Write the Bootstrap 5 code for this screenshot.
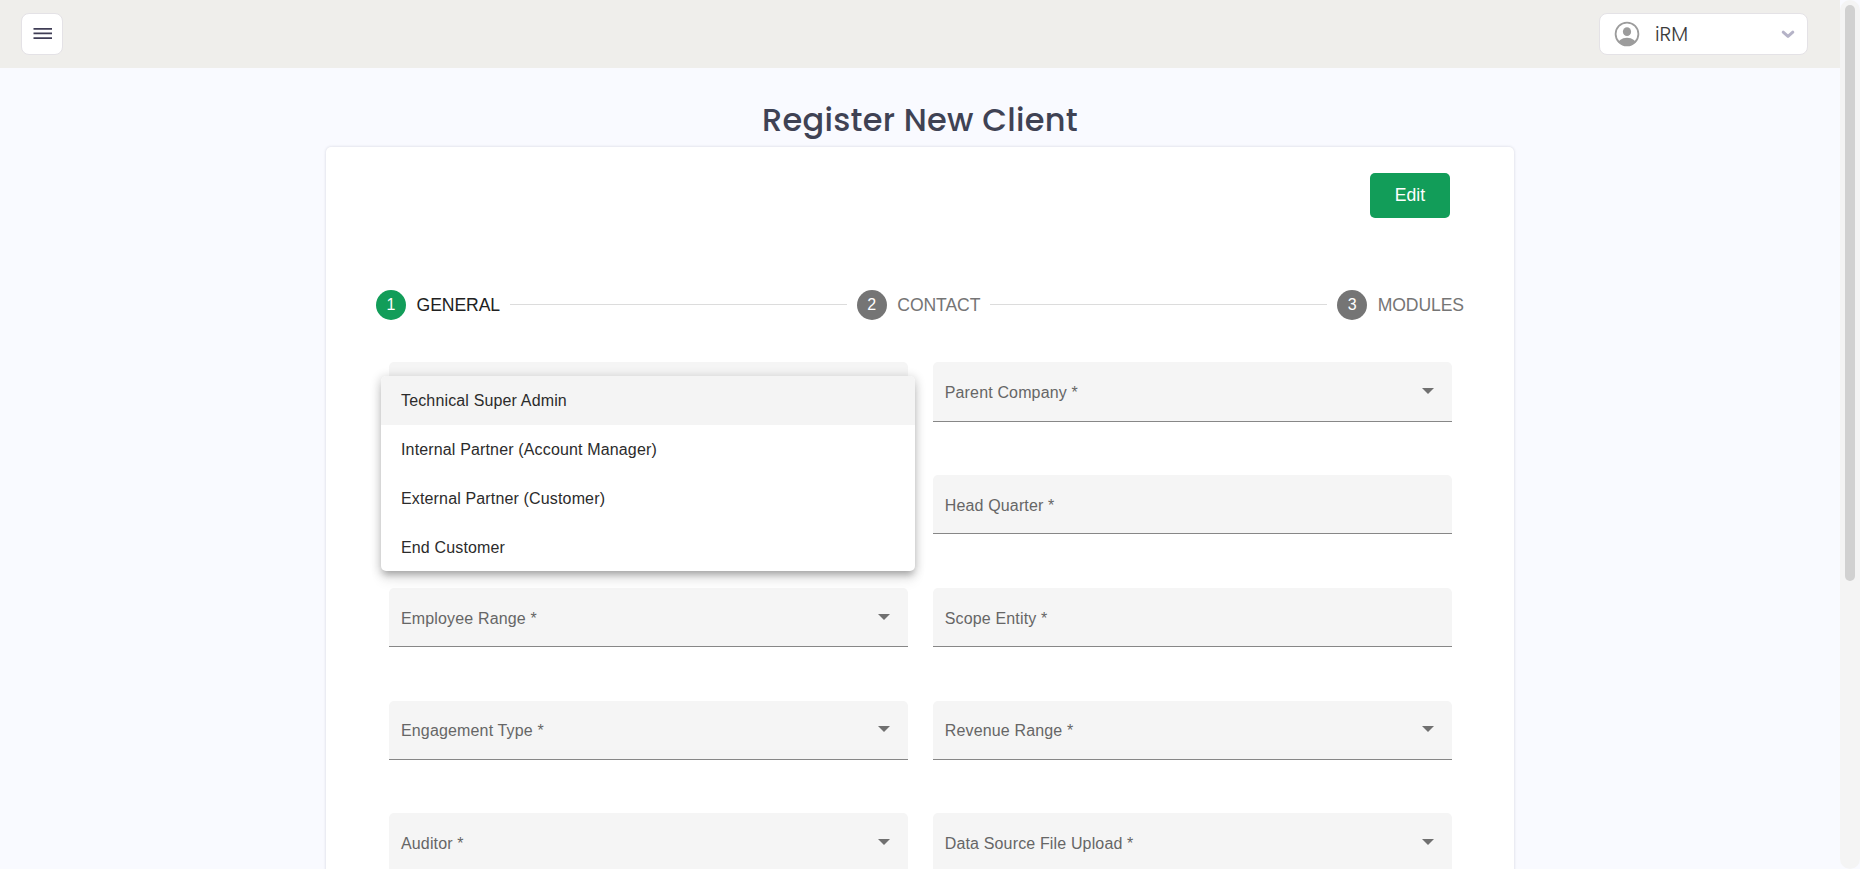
<!DOCTYPE html>
<html lang="en">
<head>
<meta charset="utf-8">
<meta name="viewport" content="width=device-width, initial-scale=1">
<title>Register New Client</title>
<link href="https://cdn.jsdelivr.net/npm/bootstrap@5.3.0/dist/css/bootstrap.min.css" rel="stylesheet">
<style>
  body { font-family: "Liberation Sans", Arial, sans-serif; background: #f9faff; color: #212121; height: 100vh; }
  .top-bar { height: 68px; background: #efeeeb; padding: 13px 32px 0 21px; }
  .menu-btn { width: 42px; height: 42px; background: #fff; border: 1px solid #e4e2e6; border-radius: 8px; }
  .menu-btn svg { margin: 13px 0 0 1px; }
  .profile-btn { width: 209px; height: 42px; background: #fff; border: 1px solid #e4e2e6; border-radius: 8px; padding: 0 12px 0 14px; color: #3c3c3c; }
  .profile-name { font-family: Poppins, Inter, sans-serif; font-size: 20px; margin-left: 15px; font-weight: 300; }
  .page-title { font-family: Poppins, Inter, sans-serif; font-weight: 500; font-size: 32px; line-height: 48px; letter-spacing: .25px; color: #3f4254; margin: 28px 0 3px; }
  .form-card { width: 1188px; height: 900px; border: 0; border-radius: 5px; margin-left: 326px; box-shadow: 0 0 3px rgba(60,60,90,.2); padding: 26px 50px 0 50px; }
  .edit-btn { width: 80px; height: 45px; background: #129d59; border: 0; border-radius: 5px; font-size: 17.6px; color: #fff; padding: 0 0 1px; margin-right: 14px; }
  .stepper { margin-top: 72px; height: 30px; font-size: 17.6px; color: #757575; }
  .step-dot { width: 30px; height: 30px; border-radius: 50%; background: #757575; color: #fff; font-size: 16px; flex: none; }
  .step-label { margin-left: 10.6px; letter-spacing: -.1px; white-space: nowrap; }
  .step-item.current .step-dot { background: #129d59; }
  .step-item.current { color: #212121; }
  .step-line { height: 1px; background: #dcdcdc; margin: 0 10px; position: relative; top: -1px; }
  .fields { margin: 42.2px 12.5px 0 13px; display: grid; grid-template-columns: 1fr 1fr; column-gap: 25px; row-gap: 53.4px; }
  .field { height: 59.4px; background: #f5f5f5; border-bottom: 1px solid #878787; border-radius: 5px 5px 0 0; padding: 3.5px 18px 0 12px; font-size: 16px; letter-spacing: .15px; color: #666; }
  .field svg { margin-top: -4px; }
  .option-menu { position: absolute; left: -8px; top: 13.8px; width: 534px; background: #fff; border-radius: 5px; overflow: hidden; z-index: 2; color: #2b2b2b; letter-spacing: .15px; }
  .menu-shadow { box-shadow: 0 6px 6px -3px rgba(0,0,0,.2), 0 10px 12px 1px rgba(0,0,0,.06), 0 2px 10px 2px rgba(0,0,0,.16); }
  .option { height: 48.8px; padding: 2px 20px 0; }
  .option.selected { background: #f4f4f4; }
  .scroll-track { width: 20px; background: #f4f4f4; border-radius: 10px; padding: 5px; flex: none; }
  .scroll-thumb { height: 576px; border-radius: 5px; background: #d1d1d1; }
</style>
</head>
<body class="d-flex overflow-hidden">
<div class="flex-grow-1 overflow-hidden">
  <header class="top-bar d-flex justify-content-between align-items-start">
    <button class="menu-btn p-0 d-flex align-items-start justify-content-center" aria-label="Menu">
      <svg width="20" height="14" viewBox="0 0 20 14"><path d="M.5 1.9h18.5M.5 6.4h18.5M.5 11.1h18.5" stroke="#3f3d55" stroke-width="1.6"/></svg>
    </button>
    <button class="profile-btn d-flex align-items-center">
      <svg width="26" height="26" viewBox="0 0 26 26"><defs><clipPath id="face"><circle cx="13" cy="13" r="11.8"/></clipPath></defs><circle cx="13" cy="13" r="11.4" fill="none" stroke="#9c9c9c" stroke-width="1.8"/><ellipse cx="13" cy="10.7" rx="4.1" ry="4.4" fill="#9c9c9c"/><ellipse cx="13" cy="24" rx="9.8" ry="7.2" fill="#9c9c9c" clip-path="url(#face)"/></svg>
      <span class="profile-name">iRM</span>
      <svg class="ms-auto" width="14" height="9" viewBox="0 0 14 9"><path d="M2.2 2.2 7 6.4l4.8-4.2" fill="none" stroke="#b5b3c7" stroke-width="3" stroke-linecap="round" stroke-linejoin="round"/></svg>
    </button>
  </header>
  <h1 class="page-title text-center">Register New Client</h1>
  <main class="form-card card">
    <div class="d-flex justify-content-end"><button class="btn edit-btn">Edit</button></div>
    <div class="stepper d-flex align-items-center">
      <div class="step-item current d-flex align-items-center"><span class="step-dot d-flex align-items-center justify-content-center">1</span><span class="step-label">GENERAL</span></div>
      <div class="step-line flex-grow-1"></div>
      <div class="step-item d-flex align-items-center"><span class="step-dot d-flex align-items-center justify-content-center">2</span><span class="step-label">CONTACT</span></div>
      <div class="step-line flex-grow-1"></div>
      <div class="step-item d-flex align-items-center"><span class="step-dot d-flex align-items-center justify-content-center">3</span><span class="step-label">MODULES</span></div>
    </div>
    <div class="fields">
      <div class="field position-relative">
        <div class="option-menu menu-shadow">
          <div class="option selected d-flex align-items-center">Technical Super Admin</div>
          <div class="option d-flex align-items-center">Internal Partner (Account Manager)</div>
          <div class="option d-flex align-items-center">External Partner (Customer)</div>
          <div class="option d-flex align-items-center">End Customer</div>
        </div>
      </div>
      <div class="field d-flex align-items-center justify-content-between">Parent Company *<svg width="12" height="6" viewBox="0 0 12 6"><path d="M0 0h12L6 6z" fill="#707070"/></svg></div>
      <div class="field"></div>
      <div class="field d-flex align-items-center">Head Quarter *</div>
      <div class="field d-flex align-items-center justify-content-between">Employee Range *<svg width="12" height="6" viewBox="0 0 12 6"><path d="M0 0h12L6 6z" fill="#707070"/></svg></div>
      <div class="field d-flex align-items-center">Scope Entity *</div>
      <div class="field d-flex align-items-center justify-content-between">Engagement Type *<svg width="12" height="6" viewBox="0 0 12 6"><path d="M0 0h12L6 6z" fill="#707070"/></svg></div>
      <div class="field d-flex align-items-center justify-content-between">Revenue Range *<svg width="12" height="6" viewBox="0 0 12 6"><path d="M0 0h12L6 6z" fill="#707070"/></svg></div>
      <div class="field d-flex align-items-center justify-content-between">Auditor *<svg width="12" height="6" viewBox="0 0 12 6"><path d="M0 0h12L6 6z" fill="#707070"/></svg></div>
      <div class="field d-flex align-items-center justify-content-between">Data Source File Upload *<svg width="12" height="6" viewBox="0 0 12 6"><path d="M0 0h12L6 6z" fill="#707070"/></svg></div>
    </div>
  </main>
</div>
<div class="scroll-track"><div class="scroll-thumb"></div></div>
<script src="https://cdn.jsdelivr.net/npm/bootstrap@5.3.0/dist/js/bootstrap.bundle.min.js"></script>
</body>
</html>
